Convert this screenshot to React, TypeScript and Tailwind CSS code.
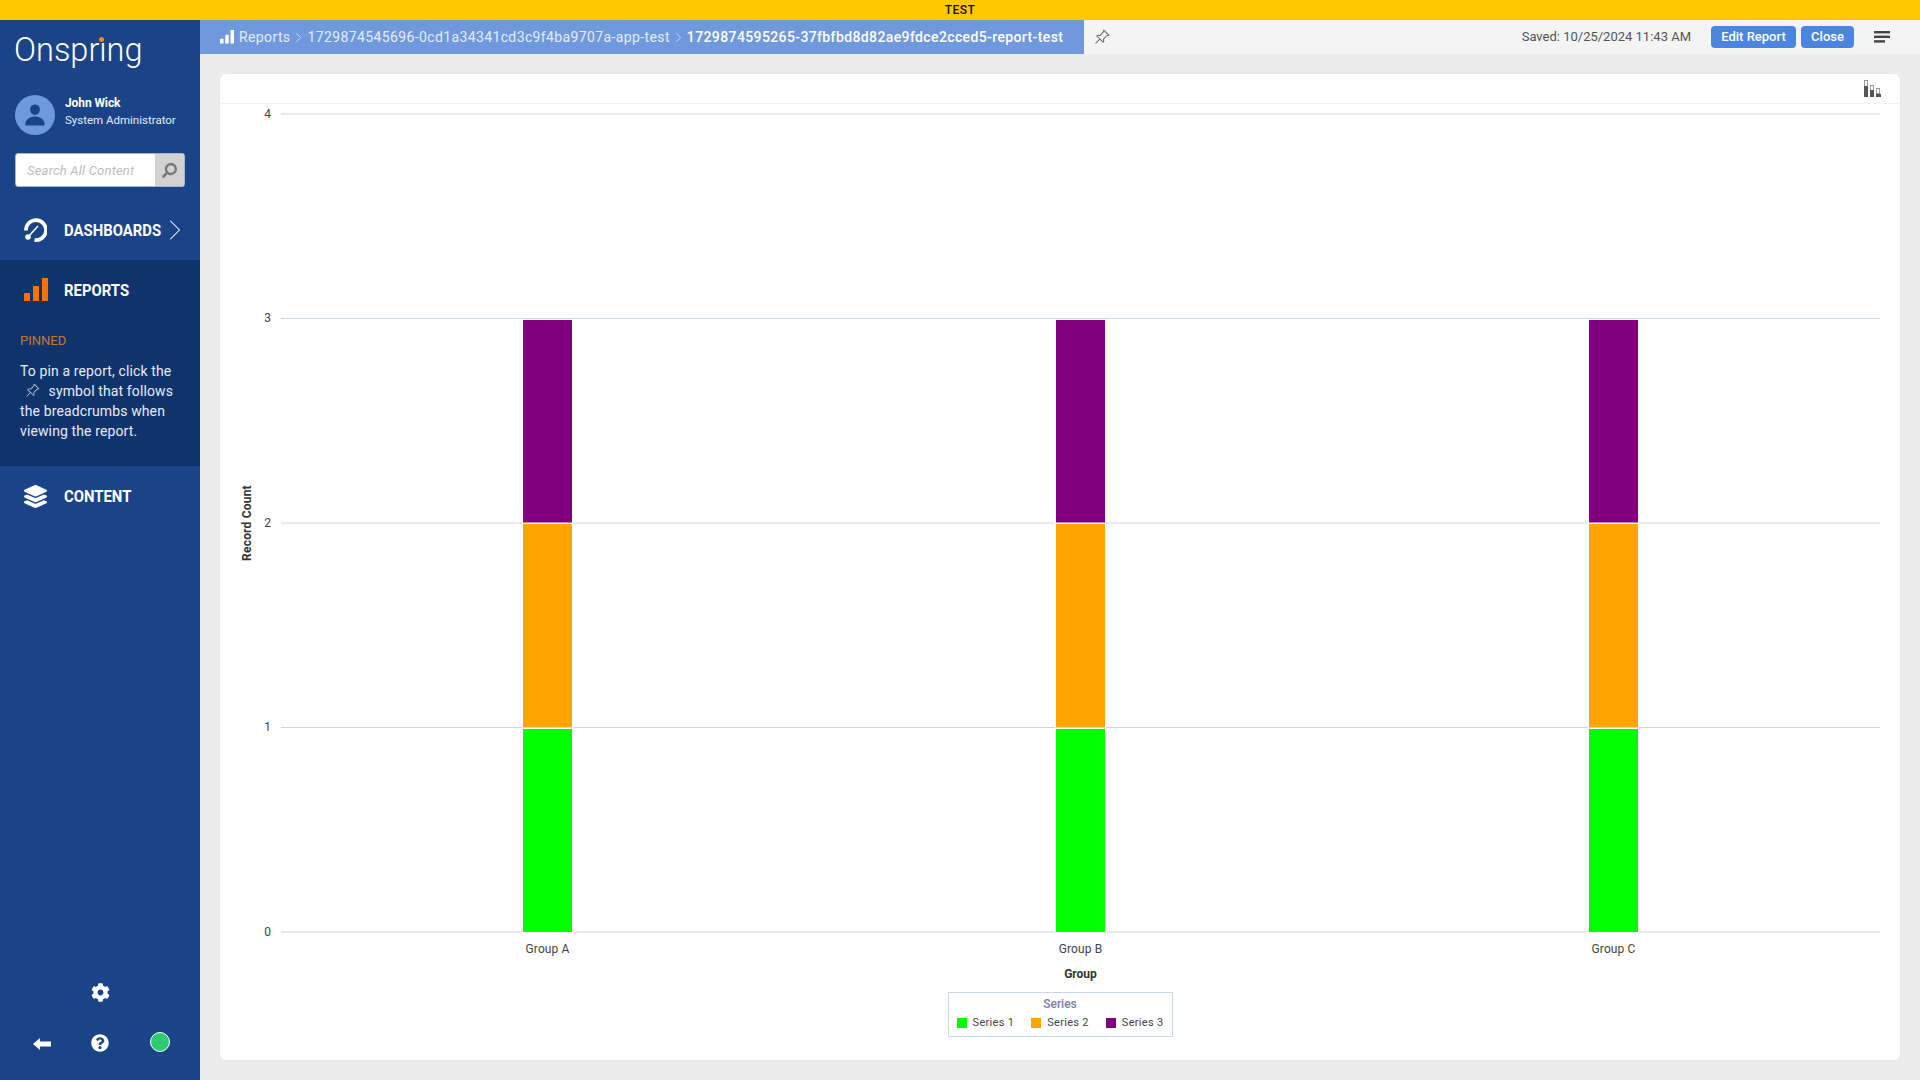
import React from 'react';
import { ChevronRight } from 'lucide-react';
import { BsPinAngle } from 'react-icons/bs';
import { FaCog, FaLayerGroup, FaQuestionCircle, FaSearch } from 'react-icons/fa';
import { IoPerson } from 'react-icons/io5';

const GRID = [
  { label: '4', y: 10 },
  { label: '3', y: 214.5 },
  { label: '2', y: 419 },
  { label: '1', y: 623.5 },
  { label: '0', y: 828 },
];

const GROUPS = [
  { label: 'Group A', x: 327.5 },
  { label: 'Group B', x: 860.5 },
  { label: 'Group C', x: 1393.5 },
];

const SERIES = [
  { label: 'Series 1', color: '#00ff00', top: 624.5, height: 204 },
  { label: 'Series 2', color: '#ffa500', top: 419.5, height: 204.5 },
  { label: 'Series 3', color: '#800080', top: 215.5, height: 203.5 },
];

const BarsIcon = ({ className = '' }: { className?: string }) => (
  <svg viewBox="0 0 24 24" className={className} fill="currentColor">
    <rect x="0" y="15" width="6" height="8" rx="0.5" />
    <rect x="9" y="8" width="6" height="15" rx="0.5" />
    <rect x="18" y="0" width="6" height="23" rx="0.5" />
  </svg>
);

const GaugeIcon = () => (
  <svg viewBox="0 0 24 24" className="w-6 h-6" fill="none" stroke="white" strokeWidth="3.6">
    <path d="M3 12.5 A 10 10 0 1 1 11.5 22" />
    <path d="M6 18 L15 8" strokeWidth="1.5" />
    <circle cx="5" cy="19" r="2.8" fill="white" stroke="none" />
  </svg>
);

const NavLabel = ({ children, className }: { children: React.ReactNode; className: string }) => (
  <span className={`pt-[2px] whitespace-nowrap text-[17px] font-bold origin-left scale-x-[0.875] ${className}`}>
    {children}
  </span>
);

const Sidebar = () => (
  <aside className="w-[200px] shrink-0 h-full bg-[#1a4487] flex flex-col text-white">
    <div className="h-[75px] pl-[14px] pt-[9px]">
      <div className="relative w-fit text-[32.5px] leading-[42px] font-light">
        Onspr&#305;ng
        <span className="absolute left-[85px] top-[8px] w-[5px] h-[5px] rounded-full bg-[#f5881f]" />
      </div>
    </div>
    <div className="flex items-center pl-[15px] h-[40px]">
      <div className="w-10 h-10 rounded-full bg-[#6f99dd] flex items-center justify-center">
        <IoPerson className="text-[#1a4487]" size={24} />
      </div>
      <div className="ml-[10px] pb-[6px] flex flex-col">
        <span className="text-[12px] leading-[17px] font-bold tracking-[-0.1px]">John Wick</span>
        <span className="text-[11.5px] leading-[17px] text-[#e4ecf9]">System Administrator</span>
      </div>
    </div>
    <div className="mt-[18px] mx-[15px] h-[34px] flex rounded-[3px] overflow-hidden border border-[#a9b4c6] bg-white">
      <div className="flex-1 flex items-center pl-[11px] pt-[1px] text-[13px] italic text-[#bdbdbd] tracking-[0.2px]">Search All Content</div>
      <div className="w-[29px] bg-[#d2d2d2] flex items-center justify-center">
        <FaSearch className="text-[#777777] -scale-x-100" size={15} />
      </div>
    </div>
    <div className="mt-[13px] h-[60px] flex items-center pl-[23px]">
      <GaugeIcon />
      <NavLabel className="ml-[17px] w-[98px]">DASHBOARDS</NavLabel>
      <ChevronRight className="-ml-[5px] shrink-0" size={36} strokeWidth={0.7} />
    </div>
    <div className="h-[206px] bg-[#11336c]">
      <div className="h-[60px] flex items-center pl-[24px]">
        <BarsIcon className="w-6 h-6 text-[#f57300]" />
        <NavLabel className="ml-[16px] w-[64px]">REPORTS</NavLabel>
      </div>
      <div className="pl-[20px] pt-[12px] text-[13px] leading-[18px] text-[#c17a2c]">PINNED</div>
      <p className="pl-[20px] pr-[10px] mt-[11px] text-[14px] leading-[20px] tracking-[0.12px] text-[#e4ecf9]">
        To pin a report, click the
        <br />
        <BsPinAngle className="inline mx-[5px] text-[#a9b4c6] align-[-2px]" size={15} /> symbol that follows
        <br />
        the breadcrumbs when
        <br />
        viewing the report.
      </p>
    </div>
    <div className="h-[60px] flex items-center pl-[24px]">
      <FaLayerGroup size={23} />
      <NavLabel className="ml-[17px] w-[66px]">CONTENT</NavLabel>
    </div>
    <div className="mt-auto flex flex-col items-center">
      <FaCog size={19} />
      <div className="w-full mt-[31px] mb-[27px] h-5 flex items-center">
        <div className="w-[84px] flex justify-center">
          <svg viewBox="0 0 18 12" className="w-[18px] h-3 mt-[2px]" fill="white">
            <path d="M0 6 L7 0 V3.5 H18 V8.5 H7 V12 Z" />
          </svg>
        </div>
        <div className="w-[32px] flex justify-center">
          <FaQuestionCircle size={18} />
        </div>
        <div className="ml-[34px] -mt-[2px] w-[20px] h-[20px] rounded-full bg-[#2ecc71] border border-white" />
      </div>
    </div>
  </aside>
);

const Header = () => (
  <header className="h-[34px] shrink-0 bg-[#f4f4f4] flex items-center">
    <nav className="w-[884px] h-full bg-[#7099dd] flex items-center pl-[20px] text-[14px] tracking-[0.38px] text-[#e4ecf9]">
      <BarsIcon className="w-[14px] h-[14px] text-white" />
      <span className="ml-[5px]">Reports</span>
      <ChevronRight size={17} strokeWidth={1} />
      <span>1729874545696-0cd1a34341cd3c9f4ba9707a-app-test</span>
      <ChevronRight size={17} strokeWidth={1} />
      <span className="font-medium text-white">1729874595265-37fbfbd8d82ae9fdce2cced5-report-test</span>
    </nav>
    <BsPinAngle className="ml-[10px] text-[#666666]" size={16} />
    <span className="ml-auto text-[13px] text-[#555555]">Saved: 10/25/2024 11:43 AM</span>
    <button className="ml-[20px] h-[22px] w-[85px] rounded-[4px] bg-[#4a86e0] text-white text-[13px] font-medium">Edit Report</button>
    <button className="ml-[5px] h-[22px] w-[53px] rounded-[4px] bg-[#4a86e0] text-white text-[13px] font-medium">Close</button>
    <svg viewBox="0 0 16 12" className="ml-[20px] mr-[30px] w-4 h-3" fill="#444444">
      <rect x="0" y="0" width="16" height="2.4" />
      <rect x="0" y="4.6" width="16" height="2.4" />
      <rect x="0" y="9.2" width="11" height="2.4" />
    </svg>
  </header>
);

const Chart = () => (
  <svg width="1680" height="888" className="block shrink-0" fontFamily="Roboto, sans-serif">
    {GRID.map((g) => (
      <g key={g.label}>
        <line x1="61" x2="1660" y1={g.y} y2={g.y} stroke="#ccd6eb" />
        <text x="51" y={g.y + 3.5} textAnchor="end" fontSize="12" fill="#444444">{g.label}</text>
      </g>
    ))}
    {GROUPS.map((group) => (
      <g key={group.label}>
        {SERIES.map((s) => (
          <rect key={s.label} x={group.x - 25} y={s.top} width="50" height={s.height} fill={s.color} stroke="#ffffff" />
        ))}
        <text x={group.x} y="849" textAnchor="middle" fontSize="12" letterSpacing="0.1" fill="#444444">{group.label}</text>
      </g>
    ))}
    <text x="860.5" y="874" textAnchor="middle" fontSize="12" fontWeight="700" fill="#333333">Group</text>
    <text transform="translate(31 419) rotate(-90)" textAnchor="middle" fontSize="12" fontWeight="700" letterSpacing="0.2" fill="#333333">Record Count</text>
  </svg>
);

export default function App() {
  return (
    <div className="w-screen h-screen overflow-hidden flex flex-col bg-[#ececec] font-['Roboto',sans-serif]">
      <div className="h-5 shrink-0 bg-[#ffc800] flex items-center justify-center text-[12px] font-medium tracking-[0.4px] text-[#111111]">TEST</div>
      <div className="flex-1 min-h-0 flex">
        <Sidebar />
        <main className="flex-1 min-w-0 flex flex-col">
          <Header />
          <div className="flex-1 min-h-0 pt-5 px-5 pb-5">
            <section className="h-full bg-white rounded-[6px] shadow-[0_0_2px_rgba(0,0,0,0.08)] flex flex-col">
              <div className="h-[30px] shrink-0 border-b border-[#f2f2f2] flex items-center justify-end pr-[19px]">
                <svg viewBox="0 0 17 17" className="w-[17px] h-[17px]">
                  <rect x="0.5" y="0.5" width="3" height="6" fill="#ffffff" stroke="#999999" />
                  <rect x="0" y="6" width="4" height="11" fill="#555555" />
                  <rect x="6.5" y="5.5" width="3" height="5" fill="#ffffff" stroke="#999999" />
                  <rect x="6" y="10" width="4" height="7" fill="#555555" />
                  <rect x="12.5" y="8.5" width="3" height="5" fill="#ffffff" stroke="#999999" />
                  <rect x="12" y="14" width="5" height="3" fill="#555555" />
                </svg>
              </div>
              <Chart />
              <div className="self-center w-[225px] h-[45px] border border-[#ccd6eb] flex flex-col items-center">
                <span className="mt-[3px] text-[12px] leading-[16px] font-medium text-[#7a7f9f]">Series</span>
                <div className="mt-[4px] flex items-center gap-[17px]">
                  {SERIES.map((s) => (
                    <div key={s.label} className="flex items-center gap-[6px] text-[11px] leading-[14px] tracking-[0.3px] text-[#444444]">
                      <span className="w-[10px] h-[10px]" style={{ backgroundColor: s.color }} />
                      {s.label}
                    </div>
                  ))}
                </div>
              </div>
            </section>
          </div>
        </main>
      </div>
    </div>
  );
}
